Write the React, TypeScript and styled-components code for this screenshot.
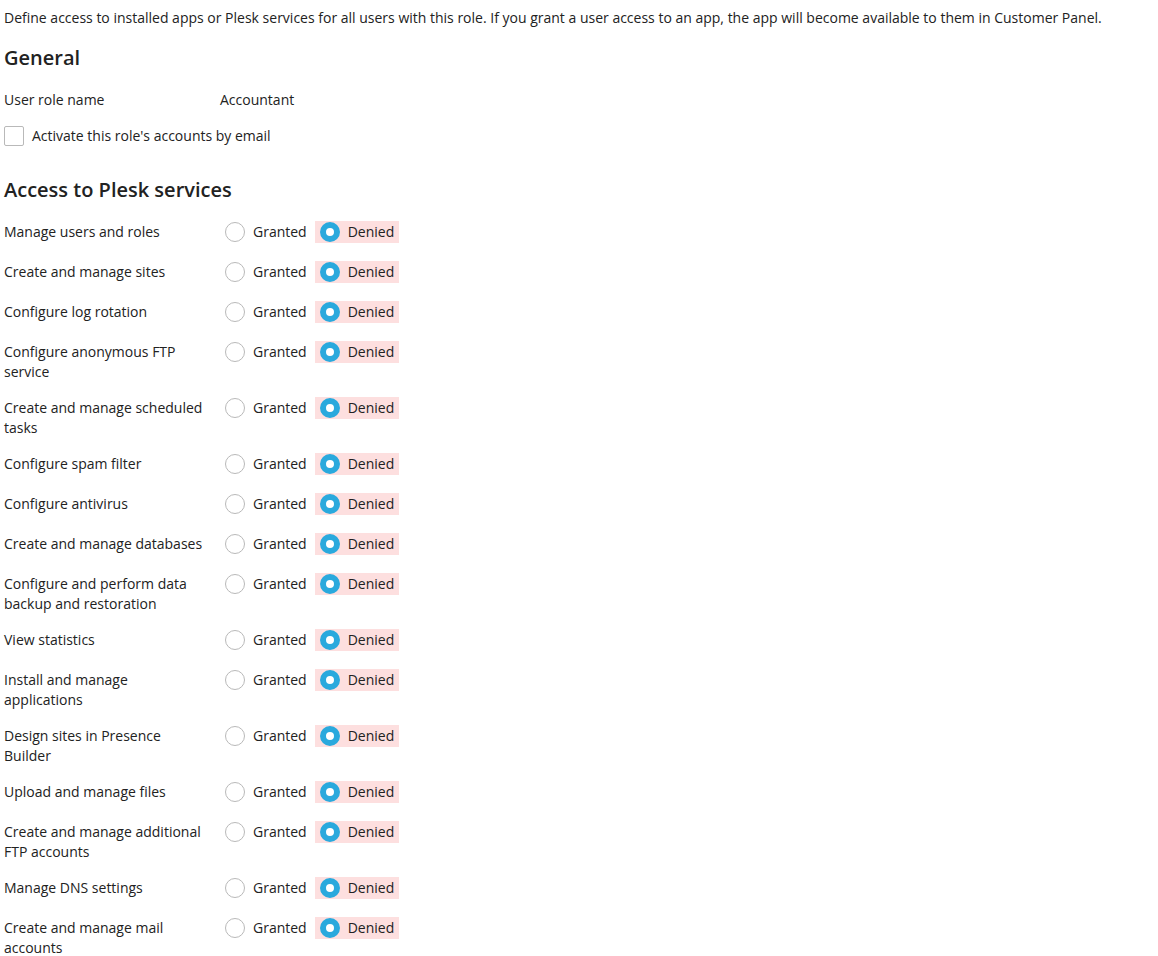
import React from "react";
import styled, { createGlobalStyle } from "styled-components";

const GlobalStyle = createGlobalStyle`
  html, body { margin: 0; padding: 0; background: #fff; }
  body {
    font-family: "Open Sans", "Noto Sans", sans-serif;
    font-size: 14px;
    line-height: 20px;
    color: #222;
  }
`;

const Page = styled.div`
  padding: 8px 4px 0;
`;

const Description = styled.p`
  margin: 0 0 16px;
  white-space: nowrap;
`;

const Heading = styled.h2<{ $top?: number; $bottom?: number }>`
  margin: ${(p) => p.$top ?? 0}px 0 ${(p) => p.$bottom ?? 10}px;
  font-size: 20px;
  line-height: 28px;
  font-weight: 600;
  color: #222;
`;

const FormRow = styled.div<{ $pt?: number; $pb?: number }>`
  display: grid;
  grid-template-columns: 216px auto;
  align-items: start;
  padding: ${(p) => p.$pt ?? 8}px 0 ${(p) => p.$pb ?? 8}px;
`;

const FieldLabel = styled.div`
  padding-right: 12px;
  line-height: 20px;
`;

const FieldValue = styled.div`
  line-height: 20px;
`;

const CheckRow = styled.label`
  display: flex;
  align-items: center;
  gap: 8px;
  height: 24px;
  padding: 6px 0 8px;
  cursor: pointer;
`;

const CheckBox = styled.span`
  width: 20px;
  height: 20px;
  box-sizing: border-box;
  border: 1px solid #b9b9b9;
  border-radius: 2px;
  background: #fff;
`;

const Options = styled.div`
  display: flex;
  align-items: center;
  gap: 3px;
  height: 24px;
  margin: -2px 0 2px;
`;

const Option = styled.label<{ $highlight?: boolean }>`
  display: inline-flex;
  align-items: center;
  gap: 8px;
  height: 22px;
  padding: 0 5px;
  background: ${(p) => (p.$highlight ? "#fddfdf" : "transparent")};
  cursor: pointer;
`;

const RadioCircle = styled.span<{ $checked?: boolean }>`
  width: 20px;
  height: 20px;
  box-sizing: border-box;
  border-radius: 50%;
  background: #fff;
  border: ${(p) => (p.$checked ? "6px solid #2aa9dd" : "1px solid #b9b9b9")};
`;

const services = [
  "Manage users and roles",
  "Create and manage sites",
  "Configure log rotation",
  "Configure anonymous FTP service",
  "Create and manage scheduled tasks",
  "Configure spam filter",
  "Configure antivirus",
  "Create and manage databases",
  "Configure and perform data backup and restoration",
  "View statistics",
  "Install and manage applications",
  "Design sites in Presence Builder",
  "Upload and manage files",
  "Create and manage additional FTP accounts",
  "Manage DNS settings",
  "Create and manage mail accounts",
];

export default function App() {
  return (
    <Page>
      <GlobalStyle />
      <Description>
        Define access to installed apps or Plesk services for all users with this role. If you grant a user access
        to an app, the app will become available to them in Customer Panel.
      </Description>

      <Heading $bottom={10}>General</Heading>
      <FormRow>
        <FieldLabel>User role name</FieldLabel>
        <FieldValue>Accountant</FieldValue>
      </FormRow>
      <CheckRow>
        <CheckBox />
        Activate this role's accounts by email
      </CheckRow>

      <Heading $top={20} $bottom={8}>
        Access to Plesk services
      </Heading>
      {services.map((s) => (
        <FormRow key={s} $pt={10} $pb={6}>
          <FieldLabel>{s}</FieldLabel>
          <Options>
            <Option>
              <RadioCircle />
              Granted
            </Option>
            <Option $highlight>
              <RadioCircle $checked />
              Denied
            </Option>
          </Options>
        </FormRow>
      ))}
    </Page>
  );
}
